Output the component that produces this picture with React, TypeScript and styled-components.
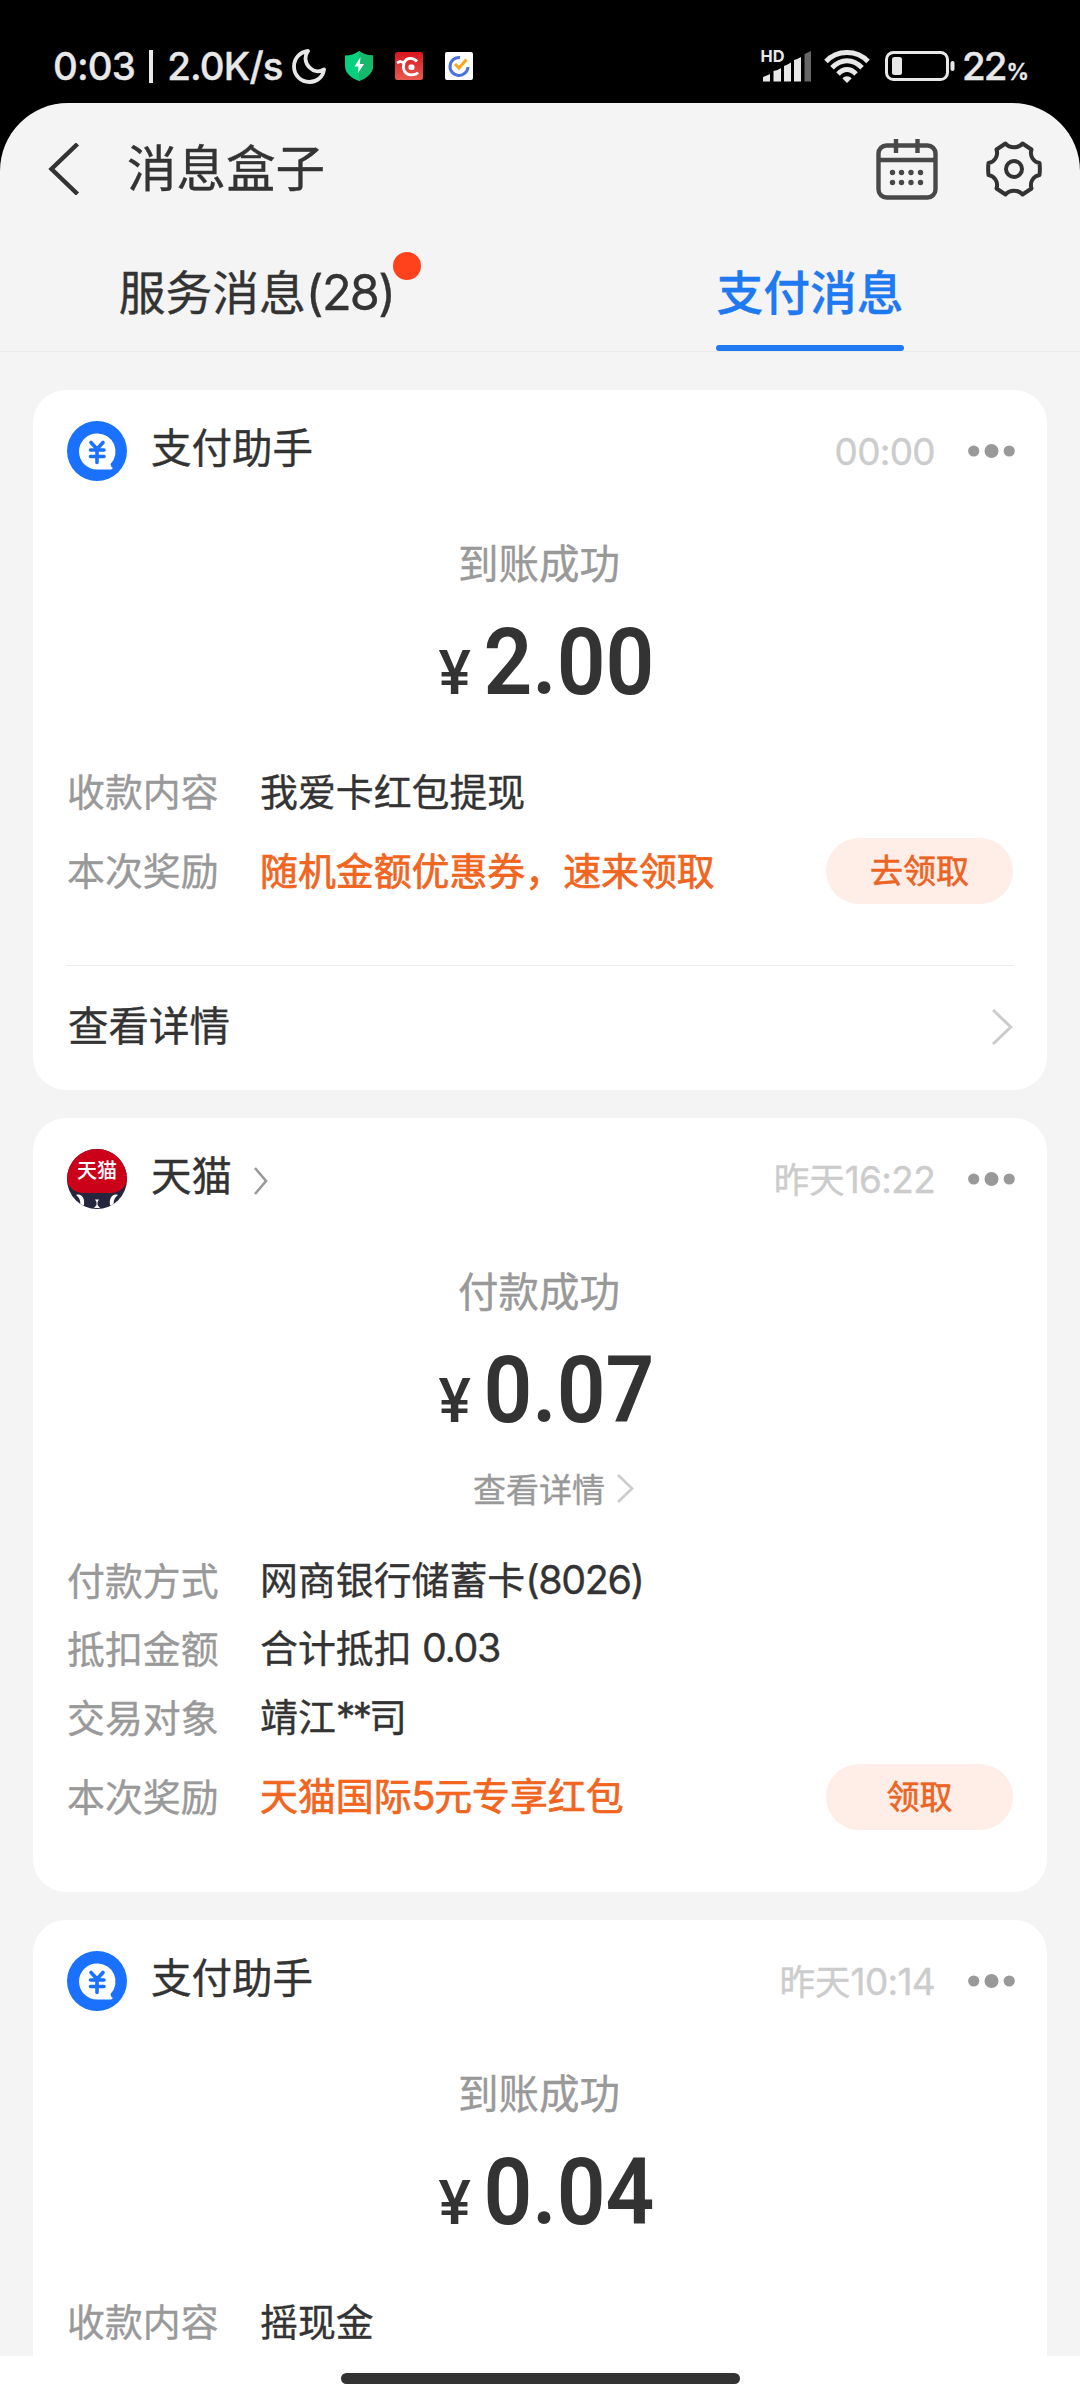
import React from "react";
import styled, { createGlobalStyle } from "styled-components";

const cjk = `"Noto Sans CJK SC", sans-serif`;

const Global = createGlobalStyle`
  *, *::before, *::after { box-sizing: border-box; }
  body { margin: 0; background: #000; }
  svg { display: block; flex: none; }
`;

const Screen = styled.div`
  width: 1080px;
  height: 2400px;
  overflow: hidden;
  display: flex;
  flex-direction: column;
  background: #000;
  color: #333;
  font-family: ${cjk};
  -webkit-text-stroke: 0.35px currentColor;
`;

const StatusBar = styled.header`
  flex: none;
  height: 103px;
  padding: 28px 51px 0 53px;
  display: flex;
  justify-content: space-between;
  color: #e8e8e8;
  font-family: Inter, ${cjk};
  font-weight: 500;
`;

const StatusGroup = styled.div`
  height: 76px;
  display: flex;
  align-items: center;
`;

const Clock = styled.span`
  width: 239px;
  font-size: 38.5px;
  letter-spacing: -0.85px;
  white-space: pre;
`;

const Divider = styled.i`
  display: inline-block;
  width: 4px;
  height: 33px;
  margin: 0 14px 0 14px;
  vertical-align: -3px;
  background: #e8e8e8;
`;

const AppBadges = styled.div`
  display: flex;
  align-items: center;
  gap: 22px;
  margin-left: 19px;
`;

const Gap = styled.span<{ $w: number }>`
  flex: none;
  width: ${(p) => p.$w}px;
`;

const Percent = styled.span`
  font-size: 38.5px;
  margin-left: 7px;
  letter-spacing: -2px;
  small { font-size: 22.5px; font-weight: 600; letter-spacing: 0; margin-left: 1px; }
`;

const Sheet = styled.main`
  flex: 1;
  min-height: 0;
  display: flex;
  flex-direction: column;
  background: #f4f4f4;
  border-radius: 68px 68px 0 0;
`;

const NavBar = styled.nav`
  flex: none;
  height: 130px;
  padding: 1px 38px 0 47px;
  display: flex;
  align-items: center;
`;

const NavTitle = styled.h1`
  flex: 1;
  margin: 0 0 5px 47px;
  font-size: 49.5px;
  line-height: 60px;
  font-weight: 400;
`;

const Tabs = styled.div`
  flex: none;
  height: 119px;
  display: grid;
  grid-template-columns: 1fr 1fr;
  justify-items: center;
  border-bottom: 1px solid #ebebeb;
`;

const Tab = styled.div<{ $active?: boolean }>`
  position: relative;
  height: 118px;
  padding: 27px 1px 0;
  margin-right: ${(p) => (p.$active ? 0 : 27)}px;
  font-size: 46.8px;
  line-height: 60px;
  white-space: nowrap;
  color: ${(p) => (p.$active ? "#1f79f1" : "#333")};
  font-weight: ${(p) => (p.$active ? 500 : 400)};
  &::after {
    content: "";
    display: ${(p) => (p.$active ? "block" : "none")};
    height: 6px;
    border-radius: 3px;
    margin-top: 25px;
    background: #1f79f1;
  }
`;

const UnreadDot = styled.i`
  position: absolute;
  top: 19px;
  right: -26px;
  width: 28px;
  height: 28px;
  border-radius: 50%;
  background: #ff411c;
`;

const Latin = styled.span<{ $tight?: boolean }>`
  font-family: Inter, ${cjk};
  font-size: 1.04em;
  letter-spacing: ${(p) => (p.$tight ? -0.08 : -0.035)}em;
`;

const Feed = styled.div`
  flex: 1;
  min-height: 0;
  overflow: hidden;
  padding: 38px 33px 0;
  display: flex;
  flex-direction: column;
  gap: 28px;
`;

const CardBox = styled.article<{ $height: number }>`
  flex: none;
  height: ${(p) => p.$height}px;
  padding: 31px 34px 0;
  background: #fff;
  border-radius: 33px;
  display: flex;
  flex-direction: column;
`;

const CardHead = styled.div`
  flex: none;
  height: 60px;
  margin-right: -2px;
  display: flex;
  align-items: center;
`;

const Sender = styled.div`
  flex: 1;
  margin-left: 24px;
  padding-bottom: 10px;
  display: flex;
  align-items: center;
  font-size: 40.5px;
  line-height: 56px;
  svg { margin: 14px 0 0 22px; }
`;

const Time = styled.time`
  margin-right: 33px;
  padding-bottom: 1px;
  font-size: 35.5px;
  line-height: 56px;
  color: #ccc;
  ${Latin} { letter-spacing: -0.018em; }
`;

const Status = styled.div`
  flex: none;
  margin-top: 51px;
  padding-right: 2px;
  text-align: center;
  font-size: 40.5px;
  line-height: 60px;
  color: #999;
`;

const Amount = styled.div`
  flex: none;
  height: 88px;
  margin-top: 27px;
  padding-left: 13px;
  display: flex;
  justify-content: center;
  align-items: baseline;
  gap: 12px;
  font-family: Roboto, sans-serif;
  font-weight: 600;
  line-height: 88px;
  -webkit-text-stroke: 0;
`;

const Currency = styled.span`
  font-size: 61px;
  font-weight: 500;
`;

const Figure = styled.span`
  font-size: 92px;
  transform: scaleX(0.93);
  margin: 0 -6px;
`;

const InlineDetail = styled.div`
  flex: none;
  display: flex;
  justify-content: center;
  align-items: center;
  gap: 12px;
  margin-top: 29px;
  padding-left: 27px;
  font-size: 33px;
  line-height: 48px;
  color: #999;
`;

const Rows = styled.div<{ $top: number }>`
  margin-top: ${(p) => p.$top}px;
  display: flex;
  flex-direction: column;
`;

const RowBox = styled.div<{ $reward?: boolean }>`
  height: ${(p) => (p.$reward ? 90 : 68.3)}px;
  display: grid;
  grid-template-columns: 193px 1fr auto;
  align-items: center;
  font-size: 37.9px;
  line-height: 56px;
  white-space: nowrap;
`;

const Label = styled.span`
  padding: 0 0 4px;
  color: #999;
`;

const Value = styled.span<{ $accent?: boolean }>`
  padding-bottom: 4px;
  word-spacing: 2px;
  color: ${(p) => (p.$accent ? "#f2651f" : "#333")};
  -webkit-text-stroke-width: ${(p) => (p.$accent ? 0.7 : 0.35)}px;
`;

const Claim = styled.button`
  width: 187px;
  height: 66px;
  padding: 0 0 4px;
  border: 0;
  border-radius: 33px;
  background: #ffeee7;
  color: #ec6424;
  font: 400 33px/50px ${cjk};
  -webkit-text-stroke: 0.6px currentColor;
`;

const Footer = styled.div`
  margin-top: 49px;
  height: 126px;
  border-top: 1px solid #e9e9e9;
  display: flex;
  align-items: center;
  justify-content: space-between;
  padding: 0 0 2px 1px;
  font-size: 40.5px;
  span { margin-bottom: 7px; }
`;

const HomeArea = styled.footer`
  flex: none;
  height: 44px;
  display: flex;
  justify-content: center;
  align-items: flex-start;
  padding-top: 17px;
  background: #fff;
  &::after {
    content: "";
    width: 399px;
    height: 11px;
    border-radius: 6px;
    background: #333;
  }
`;

const Chevron = ({ w, h, color, stroke }: { w: number; h: number; color: string; stroke: number }) => (
  <svg width={w} height={h} viewBox={`0 0 ${w} ${h}`} fill="none" stroke={color} strokeWidth={stroke}>
    <path d={`M1 1L${w - stroke * 0.75} ${h / 2}L1 ${h - 1}`} />
  </svg>
);

const Dots = () => (
  <svg width="47" height="16" viewBox="0 0 47 16" fill="#999">
    <circle cx="5.7" cy="8" r="5.6" />
    <circle cx="23.5" cy="8" r="7" />
    <circle cx="41.2" cy="8" r="5.6" />
  </svg>
);

const Moon = () => (
  <svg width="34" height="35" viewBox="0 0 34 35" fill="none" stroke="#e8e8e8" strokeWidth="3.8" strokeLinejoin="round">
    <path d="M16 2C8 3 2 9 2 17.500C2 26.500 9 33 17.500 33C25 33 31 28 32 20.500C27 23.500 21.500 22.500 17.500 18.500C13 14 12 7.500 16 2Z" />
  </svg>
);

const Shield = () => (
  <svg width="28" height="30" viewBox="0 0 28 30">
    <path d="M14 0C18 3 23 4.500 28 4.500V15C28 22 22 27 14 30C6 27 0 22 0 15V4.500C5 4.500 10 3 14 0Z" fill="#07d07e" />
    <path d="M14 0C18 3 23 4.500 28 4.500V15C28 22 22 27 14 30Z" fill="#16b96c" />
    <path d="M15.500 6L9.500 15.500H13.500L13 22L19 13H14.800Z" fill="#fff" />
  </svg>
);

const RedApp = () => (
  <svg width="28" height="28" viewBox="0 0 28 28" fill="none">
    <defs>
      <linearGradient id="redApp" x1="0" y1="0" x2="0" y2="1">
        <stop stopColor="#d8141f" />
        <stop offset="1" stopColor="#e85a50" />
      </linearGradient>
    </defs>
    <rect width="28" height="28" rx="2.500" fill="url(#redApp)" />
    <path d="M22 9.500C18 5 11 5.500 9 11C7 18 10.500 22.800 16 22.800C19.500 22.800 22 22 23 20.500" stroke="#fff" strokeWidth="2.800" />
    <path d="M2 11L5 9.500L10 11" stroke="#fff" strokeWidth="2.800" />
    <rect x="13.500" y="12.500" width="6" height="5.500" rx="2" fill="#fff" />
  </svg>
);

const TickApp = () => (
  <svg width="28" height="28" viewBox="0 0 28 28" fill="none">
    <rect width="28" height="28" rx="2" fill="#fff" />
    <path d="M15 5.500A9 9 0 1 0 23 15" stroke="#4c72dc" strokeWidth="3" />
    <path d="M10 12L14 16L21.500 7.500" stroke="#f5a91c" strokeWidth="3" />
  </svg>
);

const Signal = () => (
  <svg width="54" height="46" viewBox="-2 -6 54 46" fill="#e8e8e8">
    <text x="-0.500" y="12.500" fontSize="16.500" fontWeight="700" fontFamily="Inter, sans-serif" textLength="24" lengthAdjust="spacingAndGlyphs">HD</text>
    <path d="M2 28Q5 27 9 25V32.500H2Z" />
    <path d="M12.500 22Q16 22 20 19V32.500H12.500Z" />
    <path d="M23 17Q26 16 30 13.500V32.500H23Z" />
    <path d="M33 11Q36 10.500 40 8V32.500H33Z" />
    <path d="M43.500 5Q46 4 50 2V32.500H43.500Z" fill="#666" />
  </svg>
);

const Wifi = () => (
  <svg width="46" height="34" viewBox="0 0 46 34" fill="none" stroke="#e8e8e8" strokeWidth="4.900">
    <path d="M2 12.500C13 0.500 33 0.500 44 12.500" />
    <path d="M8 18.800C17 9.300 29 9.300 38 18.800" />
    <path d="M14 25C19.500 19 26.500 19 32 25" />
    <path d="M18.500 29.500C20.500 26.500 25.500 26.500 27.500 29.500L23 34Z" fill="#e8e8e8" stroke="none" />
  </svg>
);

const Battery = () => (
  <svg width="70" height="32" viewBox="0 0 70 32">
    <rect x="1.500" y="2.500" width="61" height="27" rx="7" fill="none" stroke="#e8e8e8" strokeWidth="3" />
    <rect x="7" y="7" width="10" height="18" rx="2.500" fill="#e8e8e8" />
    <rect x="65.500" y="11" width="4" height="10" rx="2" fill="#e8e8e8" />
  </svg>
);

const Back = () => (
  <svg width="33" height="52" viewBox="0 0 33 52" fill="none" stroke="#333" strokeWidth="4.400">
    <path d="M30.500 1L4.500 26L30.500 51" />
  </svg>
);

const Calendar = () => (
  <svg width="62" height="62" viewBox="0 0 62 62" fill="none" stroke="#484848" strokeWidth="4.400">
    <rect x="2.500" y="7.500" width="57" height="52" rx="8" />
    <path d="M3 22H59M20 1V15M41.500 1V15" />
    {[34.5, 44.5].map((y) =>
      [16.5, 25.5, 35, 44.5].map((x) => <circle key={`${x}-${y}`} cx={x} cy={y} r="2.700" fill="#484848" stroke="none" />)
    )}
  </svg>
);

const Gear = () => (
  <svg width="56" height="56" viewBox="0 0 56 56" fill="none" stroke="#333" strokeWidth="4" strokeLinejoin="round">
    <path d="M19.500 2.500C23.500 7.500 32.500 7.500 36.500 2.500L45.500 8.500C43.500 14.500 47 21 53.500 22Q54.200 28 53.500 34C47 35 43.500 41.500 45.500 47.500L36.500 53.500C32.500 48.500 23.500 48.500 19.500 53.500L10.500 47.500C12.500 41.500 9 35 2.500 34Q1.800 28 2.500 22C9 21 12.500 14.500 10.500 8.500Z" />
    <circle cx="28" cy="28" r="8" />
  </svg>
);

const PayAvatar = () => (
  <svg width="60" height="60" viewBox="0 0 60 60">
    <circle cx="30" cy="30" r="30" fill="#1a70ff" />
    <path d="M30 12.500A18 18 0 1 0 30 48.500H44Q46 48.500 45.500 46.500Q44 46.300 43.500 43A18 18 0 0 0 30 12.500Z" fill="#fff" />
    <path d="M24 21.500L30 28L36 21.500M30 28V41.500M23.500 29H37M23.500 35.500H37" stroke="#1a70ff" strokeWidth="3.600" fill="none" strokeLinecap="round" />
  </svg>
);

const TmallAvatar = () => (
  <svg width="60" height="60" viewBox="0 0 60 60">
    <defs>
      <clipPath id="tmallClip">
        <circle cx="30" cy="30" r="30" />
      </clipPath>
    </defs>
    <g clipPath="url(#tmallClip)">
      <rect width="60" height="60" fill="#25253d" />
      <path d="M0 0H60V33C57 40 51 44 44 44H16C9 44 3 40 0 33Z" fill="#cb0019" />
      <path d="M9 46C15 44 18 50 17 56L13 58C14 53 13 49 9 46Z" fill="#fff" />
      <path d="M7 48C8 52 9 54 11 57L8 56Z" fill="#fff" />
      <path d="M51 46C45 44 42 50 43 56L47 58C46 53 47 49 51 46Z" fill="#fff" />
      <path d="M53 48C52 52 51 54 49 57L52 56Z" fill="#fff" />
      <path d="M28 50.500H32L30.500 53V56L33 59H27L29.500 56V53Z" fill="#fff" />
      <text x="30" y="29" fontSize="20" fontWeight="500" fill="#fff" stroke="none" textAnchor="middle" fontFamily={cjk}>天猫</text>
    </g>
  </svg>
);

const splitLatin = (text: string) =>
  text
    .split(/([0-9().:*]+)/)
    .filter(Boolean)
    .map((part, i) =>
      /^[0-9().:*]/.test(part) ? (
        <Latin key={i} $tight={part[0] === "*"}>{part}</Latin>
      ) : (
        part
      )
    );

type Row = { label: string; value: string; action?: string };
type Message = {
  sender: string;
  tmall?: boolean;
  time: string;
  status: string;
  amount: string;
  inlineDetail?: boolean;
  footer?: boolean;
  height: number;
  rows: Row[];
};

const messages: Message[] = [
  {
    sender: "支付助手", time: "00:00", status: "到账成功", amount: "2.00", footer: true, height: 700,
    rows: [
      { label: "收款内容", value: "我爱卡红包提现" },
      { label: "本次奖励", value: "随机金额优惠券，速来领取", action: "去领取" },
    ],
  },
  {
    sender: "天猫", tmall: true, time: "昨天16:22", status: "付款成功", amount: "0.07", inlineDetail: true, height: 774,
    rows: [
      { label: "付款方式", value: "网商银行储蓄卡(8026)" },
      { label: "抵扣金额", value: "合计抵扣 0.03" },
      { label: "交易对象", value: "靖江**司" },
      { label: "本次奖励", value: "天猫国际5元专享红包", action: "领取" },
    ],
  },
  {
    sender: "支付助手", time: "昨天10:14", status: "到账成功", amount: "0.04", height: 700,
    rows: [{ label: "收款内容", value: "摇现金" }],
  },
];

const Card = ({ m }: { m: Message }) => (
  <CardBox $height={m.height}>
    <CardHead>
      {m.tmall ? <TmallAvatar /> : <PayAvatar />}
      <Sender>
        {m.sender}
        {m.tmall && <Chevron w={14} h={28} color="#999" stroke={2.6} />}
      </Sender>
      <Time>{splitLatin(m.time)}</Time>
      <Dots />
    </CardHead>
    <Status>{m.status}</Status>
    <Amount>
      <Currency>¥</Currency>
      <Figure>{m.amount}</Figure>
    </Amount>
    {m.inlineDetail && (
      <InlineDetail>
        查看详情
        <Chevron w={17} h={29} color="#ccc" stroke={2.6} />
      </InlineDetail>
    )}
    <Rows $top={m.inlineDetail ? 35 : 51}>
      {m.rows.map((r) => (
        <RowBox key={r.label} $reward={!!r.action}>
          <Label>{r.label}</Label>
          <Value $accent={!!r.action}>{splitLatin(r.value)}</Value>
          {r.action && <Claim>{r.action}</Claim>}
        </RowBox>
      ))}
    </Rows>
    {m.footer && (
      <Footer>
        <span>查看详情</span>
        <Chevron w={21} h={36} color="#ccc" stroke={3} />
      </Footer>
    )}
  </CardBox>
);

export default function App() {
  return (
    <Screen>
      <Global />
      <StatusBar>
        <StatusGroup>
          <Clock>0:03<Divider />2.0K/s</Clock>
          <Moon />
          <AppBadges>
            <Shield />
            <RedApp />
            <TickApp />
          </AppBadges>
        </StatusGroup>
        <StatusGroup>
          <Signal />
          <Gap $w={11} />
          <Wifi />
          <Gap $w={15} />
          <Battery />
          <Percent>22<small>%</small></Percent>
        </StatusGroup>
      </StatusBar>
      <Sheet>
        <NavBar>
          <Back />
          <NavTitle>消息盒子</NavTitle>
          <Calendar />
          <Gap $w={48} />
          <Gear />
        </NavBar>
        <Tabs>
          <Tab>
            服务消息<Latin>(28)</Latin>
            <UnreadDot />
          </Tab>
          <Tab $active>支付消息</Tab>
        </Tabs>
        <Feed>
          {messages.map((m) => (
            <Card key={m.time} m={m} />
          ))}
        </Feed>
      </Sheet>
      <HomeArea />
    </Screen>
  );
}
